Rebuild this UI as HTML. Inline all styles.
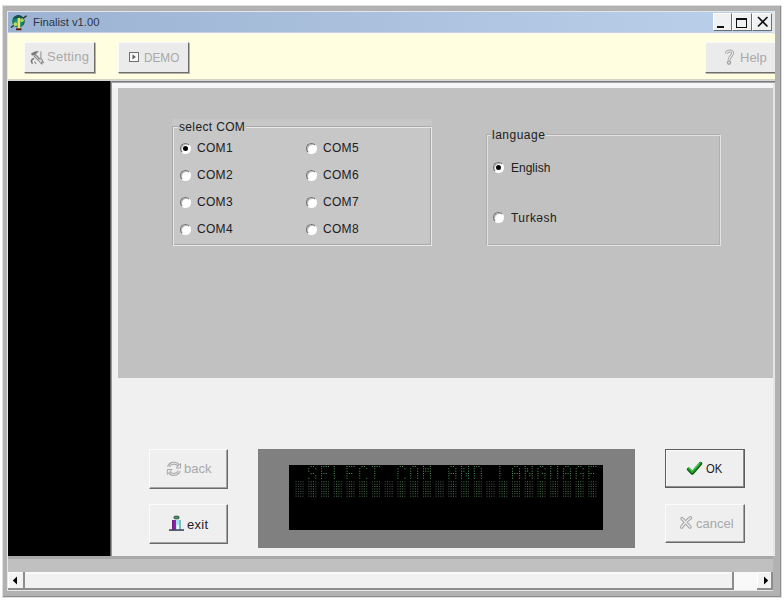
<!DOCTYPE html>
<html><head><meta charset="utf-8">
<style>
*{margin:0;padding:0;box-sizing:border-box}
html,body{width:784px;height:600px;overflow:hidden;background:#fff;font-family:"Liberation Sans",sans-serif;}
.a{position:absolute}
.t{position:absolute;white-space:nowrap;line-height:14px;transform-origin:0 0}
svg{position:absolute;overflow:visible}
.tb{top:13px;height:18px;background:#eff1f3;border-top:1px solid #fff;border-left:1px solid #fff;border-right:1px solid #6a6e72;border-bottom:1px solid #6a6e72}
.btn{background:#ebebeb;border-top:1px solid #fafafa;border-left:1px solid #fafafa;border-right:1px solid #6e6e66;border-bottom:1px solid #6e6e66;box-shadow:1px 1px 0 #b4b4aa}
.grp{box-shadow:inset 1px 1px 0 #a9a9a9, inset -1px -1px 0 #f6f6f6;border-top:1px solid #f6f6f6;border-left:1px solid #f6f6f6;border-right:1px solid #a9a9a9;border-bottom:1px solid #a9a9a9}
.lbl{font-size:12px;color:#202020;letter-spacing:0.3px}
.rad{width:11px;height:11px;border-radius:50%;background:#fff;border-top:1px solid #707070;border-left:1px solid #707070;border-right:1px solid #fff;border-bottom:1px solid #fff;box-shadow:inset 1px 1px 0 #b8b8b8}
.rad.on::after{content:"";position:absolute;left:2px;top:2px;width:5px;height:5px;border-radius:50%;background:#000}
.bb{background:#efefef;border-top:1px solid #fbfbfb;border-left:1px solid #fbfbfb;border-right:1px solid #6a6a6a;border-bottom:1px solid #6a6a6a;box-shadow:inset -1px -1px 0 #a4a4a4}
.gt{color:#a9a9a9;font-size:13px}
</style></head><body>
<!-- window frame -->
<div class="a" style="left:2px;top:5px;width:780px;height:593px;background:#dedede"></div>
<div class="a" style="left:3px;top:6px;width:778px;height:591px;background:#b2b2b2;border-right:1px solid #8e8e8e;border-bottom:1px solid #8e8e8e"></div>
<div class="a" style="left:7px;top:11px;width:768px;height:580px;background:#e4e7ea"></div>
<!-- title -->
<div class="a" style="left:8px;top:12px;width:763px;height:20px;background:linear-gradient(90deg,#9bb2d2,#bbd1ea)"></div>
<div class="a" style="left:8px;top:32px;width:765px;height:1px;background:#c9d3dc"></div>
<div class="t" id="ttl" style="left:33px;top:15px;font-size:11.3px;color:#2b3644">Finalist v1.00</div>
<svg style="left:8px;top:12px" width="24" height="20" viewBox="0 0 24 20">
 <defs><radialGradient id="gl" cx="0.45" cy="0.6" r="0.6"><stop offset="0" stop-color="#20a088"/><stop offset="0.7" stop-color="#127868"/><stop offset="1" stop-color="#0c3c3c"/></radialGradient></defs>
 <line x1="3" y1="15.6" x2="18.6" y2="3.8" stroke="#1c2428" stroke-width="1.3"/>
 <circle cx="10.4" cy="9.4" r="6.3" fill="url(#gl)"/>
 <path d="M5 6.5C6.5 3 14 2.6 15.8 6.5z" fill="#0e5048" opacity="0.8"/>
 <circle cx="14" cy="8.2" r="1.9" fill="#a8e850" opacity="0.9"/>
 <circle cx="7.4" cy="12.2" r="1.9" fill="#c0e84a" opacity="0.9"/>
 <rect x="9.6" y="6" width="2.6" height="10.8" fill="#f0cc50"/>
 <rect x="10.6" y="6" width="0.9" height="10.8" fill="#f8e890"/>
 <rect x="8" y="16.4" width="5.5" height="1.8" fill="#5a1408"/>
</svg>
<div class="a tb" style="left:713px;width:19px"></div>
<div class="a tb" style="left:732px;width:20px"></div>
<div class="a tb" style="left:752px;width:20px"></div>
<div class="a" style="left:717px;top:26px;width:7px;height:2px;background:#111"></div>
<div class="a" style="left:736px;top:18px;width:11px;height:10px;border:1px solid #111;border-top-width:2px"></div>
<svg style="left:757px;top:16px" width="12" height="12" viewBox="0 0 12 12"><path d="M1 1L10.5 10.5M10.5 1L1 10.5" stroke="#111" stroke-width="1.6"/></svg>
<!-- toolbar -->
<div class="a" style="left:8px;top:33px;width:765px;height:1px;background:#fbfbfb"></div>
<div class="a" style="left:8px;top:34px;width:767px;height:45px;background:#fffee0"></div>
<div class="a" style="left:8px;top:79px;width:767px;height:1px;background:#d4d4c6"></div>
<div class="a" style="left:8px;top:80px;width:767px;height:1px;background:#d6d6d6"></div>
<div class="a btn" style="left:24px;top:42px;width:71px;height:31px"></div>
<div class="a btn" style="left:118px;top:42px;width:71px;height:31px"></div>
<div class="a btn" style="left:705px;top:42px;width:70px;height:31px;border-right:none"></div>
<div class="t gt" id="set" style="left:47px;top:50px;letter-spacing:0.25px">Setting</div>
<div class="t gt" id="demo" style="left:144px;top:51px;transform:scaleX(0.905)">DEMO</div>
<div class="t gt" id="help" style="left:740px;top:51px">Help</div>
<svg style="left:29px;top:49px" width="16" height="16" viewBox="0 0 16 16">
 <path d="M2 4.6L6 2.4L9.8 1.9L8.6 3.6L5.6 6.2L3 6.4z" fill="#7a7a7a"/>
 <path d="M5.6 6.2L14 14.6" stroke="#8c8c8c" stroke-width="3.2"/>
 <path d="M5.8 6.6L13.8 14.6" stroke="#e6e6e6" stroke-width="1"/>
 <rect x="11" y="2.4" width="1.7" height="7" fill="#b4b4b4"/>
 <path d="M5.2 9.6C2.2 9.6 1.6 13 3.6 14.6" stroke="#7a7a7a" stroke-width="1.7" fill="none"/>
 <path d="M9.6 10.2L12.6 9.6L14 12.6L11.4 14" fill="#d8d8d8" stroke="#8a8a8a" stroke-width="1"/>
 <path d="M5.5 12.5L7 15" stroke="#8a8a8a" stroke-width="1.2"/>
</svg>
<svg style="left:128px;top:51px" width="12" height="12" viewBox="0 0 12 12">
 <rect x="1.5" y="1.5" width="9" height="9" fill="#f8f8f8" stroke="#6e6e6e" stroke-width="1"/>
 <path d="M4.5 3.2L7.8 5.9L4.5 8.6z" fill="#5c5c5c"/>
</svg>
<svg style="left:722px;top:47px" width="16" height="19" viewBox="0 0 16 19" fill="none">
 <path d="M4.3 6.6C4.6 3.6 10.8 2.8 10.6 6.2C10.4 8.6 7.6 9.4 7 13" stroke="#a6a6a6" stroke-width="3"/>
 <circle cx="7" cy="15.6" r="1.6" stroke="#a6a6a6" stroke-width="1.4"/>
 <path d="M4.3 6.6C4.6 3.6 10.8 2.8 10.6 6.2C10.4 8.6 7.6 9.4 7 13" stroke="#ececec" stroke-width="1.1"/>
</svg>
<!-- client -->
<div class="a" style="left:8px;top:81px;width:767px;height:475px;background:#f0f0f0"></div>
<div class="a" style="left:112px;top:81px;width:663px;height:1px;background:#7c7c80"></div><div class="a" style="left:112px;top:82px;width:663px;height:1px;background:#a4a4a8"></div>
<div class="a" style="left:112px;top:83px;width:663px;height:5px;background:#f6f6f6"></div>
<div class="a" style="left:8px;top:81px;width:102px;height:475px;background:#000"></div>
<div class="a" style="left:110px;top:81px;width:2px;height:475px;background:linear-gradient(90deg,#3c3c3c,#b4b4b4)"></div>
<div class="a" style="left:118px;top:88px;width:655px;height:290px;background:#c1c1c1"></div>
<!-- status & scroll -->
<div class="a" style="left:773px;top:556px;width:2px;height:35px;background:#b2b2b2"></div>
<div class="a" style="left:8px;top:556px;width:765px;height:3px;background:#a9a9a9"></div>
<div class="a" style="left:8px;top:559px;width:765px;height:13px;background:#c0c0c0"></div>
<div class="a" style="left:8px;top:572px;width:765px;height:2px;background:#fafafa"></div>
<div class="a" style="left:8px;top:574px;width:765px;height:14px;background:#f1f1f1"></div>
<div class="a" style="left:8px;top:588px;width:765px;height:2px;background:#8d8d8d"></div>
<div class="a" style="left:8px;top:572px;width:15px;height:16px;background:#f3f3f3;border-top:1px solid #fff;border-left:1px solid #fff"></div>
<div class="a" style="left:23px;top:572px;width:2px;height:17px;background:#8d8d8d"></div>
<svg style="left:12px;top:576px" width="6" height="9" viewBox="0 0 6 9"><path d="M5 0.5V8.5L0.8 4.5z" fill="#000"/></svg>
<div class="a" style="left:732px;top:572px;width:2px;height:18px;background:#8d8d8d"></div>
<div class="a" style="left:734px;top:572px;width:23px;height:18px;background:#f9f9f9"></div>
<div class="a" style="left:757px;top:572px;width:14px;height:16px;background:#f3f3f3;border-top:1px solid #fff;border-left:1px solid #fff"></div>
<div class="a" style="left:757px;top:588px;width:16px;height:2px;background:#8d8d8d"></div>
<div class="a" style="left:771px;top:572px;width:2px;height:18px;background:#8d8d8d"></div>
<svg style="left:763px;top:576px" width="6" height="9" viewBox="0 0 6 9"><path d="M1 0.5V8.5L5.2 4.5z" fill="#000"/></svg>
<div class="a" style="left:773px;top:83px;width:2px;height:473px;background:#e6e6e6"></div>
<!-- groups -->
<div class="a" style="left:172px;top:119px;width:260px;height:127px;background:#c7c7c7"></div>
<div class="a" style="left:172px;top:126px;width:259px;height:119px;border:1px solid #a9a9a9"></div>
<div class="a" style="left:173px;top:127px;width:259px;height:119px;border:1px solid #e8e8e8"></div>
<div class="t lbl" id="selcom" style="left:178px;top:120px;letter-spacing:0.35px;background:#c7c7c7;padding:0 1px">select COM</div>
<div class="a" style="left:486px;top:134px;width:234px;height:111px;border:1px solid #aeaeae"></div>
<div class="a" style="left:487px;top:135px;width:234px;height:111px;border:1px solid #e2e2e2"></div>
<div class="t lbl" id="lang" style="left:491px;top:128px;letter-spacing:0.5px;background:#c1c1c1;padding:0 1px">language</div>

<div class="a rad on" style="left:180px;top:143px"></div><div class="t lbl" style="left:197px;top:141px">COM1</div>
<div class="a rad" style="left:180px;top:170px"></div><div class="t lbl" style="left:197px;top:168px">COM2</div>
<div class="a rad" style="left:180px;top:197px"></div><div class="t lbl" style="left:197px;top:195px">COM3</div>
<div class="a rad" style="left:180px;top:224px"></div><div class="t lbl" style="left:197px;top:222px">COM4</div>
<div class="a rad" style="left:306px;top:143px"></div><div class="t lbl" style="left:323px;top:141px">COM5</div>
<div class="a rad" style="left:306px;top:170px"></div><div class="t lbl" style="left:323px;top:168px">COM6</div>
<div class="a rad" style="left:306px;top:197px"></div><div class="t lbl" style="left:323px;top:195px">COM7</div>
<div class="a rad" style="left:306px;top:224px"></div><div class="t lbl" style="left:323px;top:222px">COM8</div>
<div class="a rad on" style="left:493px;top:162px"></div><div class="t lbl" id="eng" style="left:511px;top:161px;letter-spacing:0px">English</div>
<div class="a rad" style="left:493px;top:212px"></div><div class="t lbl" id="turk" style="left:511px;top:211px;letter-spacing:0.45px">Turkəsh</div>

<!-- bottom buttons -->
<div class="a bb" style="left:149px;top:449px;width:79px;height:40px"></div>
<div class="a bb" style="left:149px;top:504px;width:79px;height:40px"></div>
<div class="a bb" style="left:665px;top:449px;width:80px;height:39px;border:1px solid #5e5e5e;box-shadow:inset -1px -1px 0 #8b8b8b, inset 1px 1px 0 #fbfbfb"></div>
<div class="a bb" style="left:665px;top:504px;width:80px;height:39px"></div>
<div class="t gt" id="back" style="left:184px;top:462px">back</div>
<div class="t" id="exit" style="left:187px;top:518px;letter-spacing:0.3px;font-size:13px;color:#222">exit</div>
<div class="t" id="ok" style="left:706px;top:462px;transform:scaleX(0.87);font-size:13px;color:#222">OK</div>
<div class="t gt" id="cancel" style="left:696px;top:517px">cancel</div>
<svg style="left:164px;top:459px" width="20" height="20" viewBox="0 0 20 20" fill="none">
 <path d="M4.6 8C5.6 4 12 2.6 14.6 6.6" stroke="#a8a8a8" stroke-width="3"/>
 <path d="M15.2 11.8C14.2 15.6 7.6 17 5.4 13" stroke="#a8a8a8" stroke-width="3"/>
 <path d="M4.6 8C5.6 4 12 2.6 14.6 6.6" stroke="#efefef" stroke-width="1"/>
 <path d="M15.2 11.8C14.2 15.6 7.6 17 5.4 13" stroke="#efefef" stroke-width="1"/>
 <path d="M16.5 4.5V9H12z" fill="#efefef" stroke="#a8a8a8" stroke-width="1"/>
 <path d="M3.3 10.5V15.5L8 10.5z" fill="#efefef" stroke="#a8a8a8" stroke-width="1"/>
</svg>
<svg style="left:166px;top:513px" width="20" height="20" viewBox="0 0 20 20">
 <rect x="8" y="3.2" width="5" height="2.6" rx="1" fill="#4a9a6a" stroke="#1c3a2a" stroke-width="0.8"/>
 <rect x="6.3" y="7" width="3.8" height="9.6" fill="#9a1cae"/>
 <rect x="6.3" y="7" width="0.9" height="9.6" fill="#4a1060"/>
 <rect x="10.1" y="7" width="4.4" height="9.6" fill="#9ae6ec"/>
 <rect x="13.6" y="7" width="0.9" height="9.6" fill="#3a8890"/>
 <rect x="10.8" y="12" width="2" height="4.6" fill="#f8ffff"/>
 <rect x="3" y="16.4" width="15" height="1.3" fill="#1c1c3c"/>
</svg>
<svg style="left:684px;top:458px" width="20" height="20" viewBox="0 0 20 20" fill="none">
 <path d="M4.6 11.2L8.3 15L16.6 5.6" stroke="#0a5212" stroke-width="3.4" stroke-linejoin="round" stroke-linecap="round"/>
 <path d="M4.6 10.6L8.3 14.2L16.2 5.2" stroke="#1aa224" stroke-width="2.2" stroke-linejoin="round" stroke-linecap="round"/>
 <path d="M5.2 10.2L8.3 13.2L15.6 5" stroke="#6ee06e" stroke-width="0.8"/>
</svg>
<svg style="left:677px;top:513px" width="18" height="18" viewBox="0 0 18 18" fill="none">
 <path d="M5 5.6L13 14M13.6 4.8C10.5 6.8 7.2 10.8 4.6 14.2" stroke="#a8a8a8" stroke-width="3.4" stroke-linecap="round"/>
 <path d="M5 5.6L13 14M13.6 4.8C10.5 6.8 7.2 10.8 4.6 14.2" stroke="#efefef" stroke-width="1.3" stroke-linecap="round"/>
</svg>

<!-- LCD -->
<div class="a" style="left:258px;top:449px;width:377px;height:99px;background:#808080"></div>
<div class="a" style="left:289px;top:465px;width:314px;height:65px;background:#000;overflow:hidden"><svg width="314" height="65" viewBox="0 0 314 65" style="left:0;top:0"><path fill="#52965a" d="M21.66 1.00h1.0v1.0h-1.0zM23.99 1.00h1.0v1.0h-1.0zM19.33 3.33h1.0v1.0h-1.0zM26.32 3.33h1.0v1.0h-1.0zM19.33 5.66h1.0v1.0h-1.0zM21.66 7.99h1.0v1.0h-1.0zM23.99 7.99h1.0v1.0h-1.0zM26.32 10.32h1.0v1.0h-1.0zM19.33 12.65h1.0v1.0h-1.0zM26.32 12.65h1.0v1.0h-1.0zM32.06 1.00h1.0v1.0h-1.0zM34.39 1.00h1.0v1.0h-1.0zM36.72 1.00h1.0v1.0h-1.0zM39.05 1.00h1.0v1.0h-1.0zM32.06 3.33h1.0v1.0h-1.0zM32.06 5.66h1.0v1.0h-1.0zM32.06 7.99h1.0v1.0h-1.0zM34.39 7.99h1.0v1.0h-1.0zM36.72 7.99h1.0v1.0h-1.0zM32.06 10.32h1.0v1.0h-1.0zM32.06 12.65h1.0v1.0h-1.0zM44.79 1.00h1.0v1.0h-1.0zM44.79 3.33h1.0v1.0h-1.0zM44.79 5.66h1.0v1.0h-1.0zM44.79 7.99h1.0v1.0h-1.0zM44.79 10.32h1.0v1.0h-1.0zM44.79 12.65h1.0v1.0h-1.0zM57.52 1.00h1.0v1.0h-1.0zM59.85 1.00h1.0v1.0h-1.0zM62.18 1.00h1.0v1.0h-1.0zM64.51 1.00h1.0v1.0h-1.0zM57.52 3.33h1.0v1.0h-1.0zM57.52 5.66h1.0v1.0h-1.0zM57.52 7.99h1.0v1.0h-1.0zM59.85 7.99h1.0v1.0h-1.0zM62.18 7.99h1.0v1.0h-1.0zM57.52 10.32h1.0v1.0h-1.0zM57.52 12.65h1.0v1.0h-1.0zM72.58 1.00h1.0v1.0h-1.0zM74.91 1.00h1.0v1.0h-1.0zM70.25 3.33h1.0v1.0h-1.0zM77.24 3.33h1.0v1.0h-1.0zM70.25 5.66h1.0v1.0h-1.0zM70.25 7.99h1.0v1.0h-1.0zM70.25 10.32h1.0v1.0h-1.0zM70.25 12.65h1.0v1.0h-1.0zM77.24 12.65h1.0v1.0h-1.0zM82.98 1.00h1.0v1.0h-1.0zM85.31 1.00h1.0v1.0h-1.0zM87.64 1.00h1.0v1.0h-1.0zM89.97 1.00h1.0v1.0h-1.0zM85.31 3.33h1.0v1.0h-1.0zM85.31 5.66h1.0v1.0h-1.0zM85.31 7.99h1.0v1.0h-1.0zM85.31 10.32h1.0v1.0h-1.0zM85.31 12.65h1.0v1.0h-1.0zM110.77 1.00h1.0v1.0h-1.0zM113.10 1.00h1.0v1.0h-1.0zM108.44 3.33h1.0v1.0h-1.0zM115.43 3.33h1.0v1.0h-1.0zM108.44 5.66h1.0v1.0h-1.0zM108.44 7.99h1.0v1.0h-1.0zM108.44 10.32h1.0v1.0h-1.0zM108.44 12.65h1.0v1.0h-1.0zM115.43 12.65h1.0v1.0h-1.0zM123.50 1.00h1.0v1.0h-1.0zM125.83 1.00h1.0v1.0h-1.0zM121.17 3.33h1.0v1.0h-1.0zM128.16 3.33h1.0v1.0h-1.0zM121.17 5.66h1.0v1.0h-1.0zM128.16 5.66h1.0v1.0h-1.0zM121.17 7.99h1.0v1.0h-1.0zM128.16 7.99h1.0v1.0h-1.0zM121.17 10.32h1.0v1.0h-1.0zM128.16 10.32h1.0v1.0h-1.0zM121.17 12.65h1.0v1.0h-1.0zM128.16 12.65h1.0v1.0h-1.0zM133.90 1.00h1.0v1.0h-1.0zM140.89 1.00h1.0v1.0h-1.0zM133.90 3.33h1.0v1.0h-1.0zM136.23 3.33h1.0v1.0h-1.0zM138.56 3.33h1.0v1.0h-1.0zM140.89 3.33h1.0v1.0h-1.0zM133.90 5.66h1.0v1.0h-1.0zM136.23 5.66h1.0v1.0h-1.0zM138.56 5.66h1.0v1.0h-1.0zM140.89 5.66h1.0v1.0h-1.0zM133.90 7.99h1.0v1.0h-1.0zM140.89 7.99h1.0v1.0h-1.0zM133.90 10.32h1.0v1.0h-1.0zM140.89 10.32h1.0v1.0h-1.0zM133.90 12.65h1.0v1.0h-1.0zM140.89 12.65h1.0v1.0h-1.0zM161.69 1.00h1.0v1.0h-1.0zM164.02 1.00h1.0v1.0h-1.0zM159.36 3.33h1.0v1.0h-1.0zM166.35 3.33h1.0v1.0h-1.0zM159.36 5.66h1.0v1.0h-1.0zM166.35 5.66h1.0v1.0h-1.0zM159.36 7.99h1.0v1.0h-1.0zM161.69 7.99h1.0v1.0h-1.0zM164.02 7.99h1.0v1.0h-1.0zM166.35 7.99h1.0v1.0h-1.0zM159.36 10.32h1.0v1.0h-1.0zM166.35 10.32h1.0v1.0h-1.0zM159.36 12.65h1.0v1.0h-1.0zM166.35 12.65h1.0v1.0h-1.0zM172.09 1.00h1.0v1.0h-1.0zM179.08 1.00h1.0v1.0h-1.0zM172.09 3.33h1.0v1.0h-1.0zM174.42 3.33h1.0v1.0h-1.0zM179.08 3.33h1.0v1.0h-1.0zM172.09 5.66h1.0v1.0h-1.0zM174.42 5.66h1.0v1.0h-1.0zM179.08 5.66h1.0v1.0h-1.0zM172.09 7.99h1.0v1.0h-1.0zM176.75 7.99h1.0v1.0h-1.0zM179.08 7.99h1.0v1.0h-1.0zM172.09 10.32h1.0v1.0h-1.0zM176.75 10.32h1.0v1.0h-1.0zM179.08 10.32h1.0v1.0h-1.0zM172.09 12.65h1.0v1.0h-1.0zM179.08 12.65h1.0v1.0h-1.0zM184.82 1.00h1.0v1.0h-1.0zM187.15 1.00h1.0v1.0h-1.0zM189.48 1.00h1.0v1.0h-1.0zM184.82 3.33h1.0v1.0h-1.0zM191.81 3.33h1.0v1.0h-1.0zM184.82 5.66h1.0v1.0h-1.0zM191.81 5.66h1.0v1.0h-1.0zM184.82 7.99h1.0v1.0h-1.0zM191.81 7.99h1.0v1.0h-1.0zM184.82 10.32h1.0v1.0h-1.0zM191.81 10.32h1.0v1.0h-1.0zM184.82 12.65h1.0v1.0h-1.0zM191.81 12.65h1.0v1.0h-1.0zM210.28 1.00h1.0v1.0h-1.0zM210.28 3.33h1.0v1.0h-1.0zM210.28 5.66h1.0v1.0h-1.0zM210.28 7.99h1.0v1.0h-1.0zM210.28 10.32h1.0v1.0h-1.0zM210.28 12.65h1.0v1.0h-1.0zM225.34 1.00h1.0v1.0h-1.0zM227.67 1.00h1.0v1.0h-1.0zM223.01 3.33h1.0v1.0h-1.0zM230.00 3.33h1.0v1.0h-1.0zM223.01 5.66h1.0v1.0h-1.0zM230.00 5.66h1.0v1.0h-1.0zM223.01 7.99h1.0v1.0h-1.0zM225.34 7.99h1.0v1.0h-1.0zM227.67 7.99h1.0v1.0h-1.0zM230.00 7.99h1.0v1.0h-1.0zM223.01 10.32h1.0v1.0h-1.0zM230.00 10.32h1.0v1.0h-1.0zM223.01 12.65h1.0v1.0h-1.0zM230.00 12.65h1.0v1.0h-1.0zM235.74 1.00h1.0v1.0h-1.0zM242.73 1.00h1.0v1.0h-1.0zM235.74 3.33h1.0v1.0h-1.0zM238.07 3.33h1.0v1.0h-1.0zM242.73 3.33h1.0v1.0h-1.0zM235.74 5.66h1.0v1.0h-1.0zM238.07 5.66h1.0v1.0h-1.0zM242.73 5.66h1.0v1.0h-1.0zM235.74 7.99h1.0v1.0h-1.0zM240.40 7.99h1.0v1.0h-1.0zM242.73 7.99h1.0v1.0h-1.0zM235.74 10.32h1.0v1.0h-1.0zM240.40 10.32h1.0v1.0h-1.0zM242.73 10.32h1.0v1.0h-1.0zM235.74 12.65h1.0v1.0h-1.0zM242.73 12.65h1.0v1.0h-1.0zM250.80 1.00h1.0v1.0h-1.0zM253.13 1.00h1.0v1.0h-1.0zM248.47 3.33h1.0v1.0h-1.0zM255.46 3.33h1.0v1.0h-1.0zM248.47 5.66h1.0v1.0h-1.0zM248.47 7.99h1.0v1.0h-1.0zM253.13 7.99h1.0v1.0h-1.0zM255.46 7.99h1.0v1.0h-1.0zM248.47 10.32h1.0v1.0h-1.0zM255.46 10.32h1.0v1.0h-1.0zM248.47 12.65h1.0v1.0h-1.0zM255.46 12.65h1.0v1.0h-1.0zM261.20 1.00h1.0v1.0h-1.0zM268.19 1.00h1.0v1.0h-1.0zM261.20 3.33h1.0v1.0h-1.0zM268.19 3.33h1.0v1.0h-1.0zM261.20 5.66h1.0v1.0h-1.0zM268.19 5.66h1.0v1.0h-1.0zM261.20 7.99h1.0v1.0h-1.0zM268.19 7.99h1.0v1.0h-1.0zM261.20 10.32h1.0v1.0h-1.0zM268.19 10.32h1.0v1.0h-1.0zM261.20 12.65h1.0v1.0h-1.0zM268.19 12.65h1.0v1.0h-1.0zM276.26 1.00h1.0v1.0h-1.0zM278.59 1.00h1.0v1.0h-1.0zM273.93 3.33h1.0v1.0h-1.0zM280.92 3.33h1.0v1.0h-1.0zM273.93 5.66h1.0v1.0h-1.0zM280.92 5.66h1.0v1.0h-1.0zM273.93 7.99h1.0v1.0h-1.0zM276.26 7.99h1.0v1.0h-1.0zM278.59 7.99h1.0v1.0h-1.0zM280.92 7.99h1.0v1.0h-1.0zM273.93 10.32h1.0v1.0h-1.0zM280.92 10.32h1.0v1.0h-1.0zM273.93 12.65h1.0v1.0h-1.0zM280.92 12.65h1.0v1.0h-1.0zM288.99 1.00h1.0v1.0h-1.0zM291.32 1.00h1.0v1.0h-1.0zM286.66 3.33h1.0v1.0h-1.0zM293.65 3.33h1.0v1.0h-1.0zM286.66 5.66h1.0v1.0h-1.0zM286.66 7.99h1.0v1.0h-1.0zM291.32 7.99h1.0v1.0h-1.0zM293.65 7.99h1.0v1.0h-1.0zM286.66 10.32h1.0v1.0h-1.0zM293.65 10.32h1.0v1.0h-1.0zM286.66 12.65h1.0v1.0h-1.0zM293.65 12.65h1.0v1.0h-1.0zM299.39 1.00h1.0v1.0h-1.0zM301.72 1.00h1.0v1.0h-1.0zM304.05 1.00h1.0v1.0h-1.0zM306.38 1.00h1.0v1.0h-1.0zM299.39 3.33h1.0v1.0h-1.0zM299.39 5.66h1.0v1.0h-1.0zM299.39 7.99h1.0v1.0h-1.0zM301.72 7.99h1.0v1.0h-1.0zM304.05 7.99h1.0v1.0h-1.0zM299.39 10.32h1.0v1.0h-1.0zM299.39 12.65h1.0v1.0h-1.0z"/><path fill="#4a544c" d="M6.60 16.30h1.0v1.0h-1.0zM8.93 16.30h1.0v1.0h-1.0zM11.26 16.30h1.0v1.0h-1.0zM13.59 16.30h1.0v1.0h-1.0zM6.60 18.70h1.0v1.0h-1.0zM8.93 18.70h1.0v1.0h-1.0zM11.26 18.70h1.0v1.0h-1.0zM13.59 18.70h1.0v1.0h-1.0zM6.60 21.10h1.0v1.0h-1.0zM8.93 21.10h1.0v1.0h-1.0zM11.26 21.10h1.0v1.0h-1.0zM13.59 21.10h1.0v1.0h-1.0zM6.60 23.50h1.0v1.0h-1.0zM8.93 23.50h1.0v1.0h-1.0zM11.26 23.50h1.0v1.0h-1.0zM13.59 23.50h1.0v1.0h-1.0zM6.60 25.90h1.0v1.0h-1.0zM8.93 25.90h1.0v1.0h-1.0zM11.26 25.90h1.0v1.0h-1.0zM13.59 25.90h1.0v1.0h-1.0zM6.60 28.30h1.0v1.0h-1.0zM8.93 28.30h1.0v1.0h-1.0zM11.26 28.30h1.0v1.0h-1.0zM13.59 28.30h1.0v1.0h-1.0zM6.60 30.70h1.0v1.0h-1.0zM8.93 30.70h1.0v1.0h-1.0zM11.26 30.70h1.0v1.0h-1.0zM13.59 30.70h1.0v1.0h-1.0zM19.33 16.30h1.0v1.0h-1.0zM26.32 16.30h1.0v1.0h-1.0zM19.33 18.70h1.0v1.0h-1.0zM26.32 18.70h1.0v1.0h-1.0zM19.33 21.10h1.0v1.0h-1.0zM26.32 21.10h1.0v1.0h-1.0zM19.33 23.50h1.0v1.0h-1.0zM26.32 23.50h1.0v1.0h-1.0zM19.33 25.90h1.0v1.0h-1.0zM26.32 25.90h1.0v1.0h-1.0zM19.33 28.30h1.0v1.0h-1.0zM26.32 28.30h1.0v1.0h-1.0zM19.33 30.70h1.0v1.0h-1.0zM26.32 30.70h1.0v1.0h-1.0zM32.06 16.30h1.0v1.0h-1.0zM39.05 16.30h1.0v1.0h-1.0zM32.06 18.70h1.0v1.0h-1.0zM39.05 18.70h1.0v1.0h-1.0zM32.06 21.10h1.0v1.0h-1.0zM39.05 21.10h1.0v1.0h-1.0zM32.06 23.50h1.0v1.0h-1.0zM39.05 23.50h1.0v1.0h-1.0zM32.06 25.90h1.0v1.0h-1.0zM39.05 25.90h1.0v1.0h-1.0zM32.06 28.30h1.0v1.0h-1.0zM39.05 28.30h1.0v1.0h-1.0zM32.06 30.70h1.0v1.0h-1.0zM39.05 30.70h1.0v1.0h-1.0zM44.79 16.30h1.0v1.0h-1.0zM51.78 16.30h1.0v1.0h-1.0zM44.79 18.70h1.0v1.0h-1.0zM51.78 18.70h1.0v1.0h-1.0zM44.79 21.10h1.0v1.0h-1.0zM51.78 21.10h1.0v1.0h-1.0zM44.79 23.50h1.0v1.0h-1.0zM51.78 23.50h1.0v1.0h-1.0zM44.79 25.90h1.0v1.0h-1.0zM51.78 25.90h1.0v1.0h-1.0zM44.79 28.30h1.0v1.0h-1.0zM51.78 28.30h1.0v1.0h-1.0zM44.79 30.70h1.0v1.0h-1.0zM51.78 30.70h1.0v1.0h-1.0zM57.52 16.30h1.0v1.0h-1.0zM64.51 16.30h1.0v1.0h-1.0zM57.52 18.70h1.0v1.0h-1.0zM64.51 18.70h1.0v1.0h-1.0zM57.52 21.10h1.0v1.0h-1.0zM64.51 21.10h1.0v1.0h-1.0zM57.52 23.50h1.0v1.0h-1.0zM64.51 23.50h1.0v1.0h-1.0zM57.52 25.90h1.0v1.0h-1.0zM64.51 25.90h1.0v1.0h-1.0zM57.52 28.30h1.0v1.0h-1.0zM64.51 28.30h1.0v1.0h-1.0zM57.52 30.70h1.0v1.0h-1.0zM64.51 30.70h1.0v1.0h-1.0zM70.25 16.30h1.0v1.0h-1.0zM77.24 16.30h1.0v1.0h-1.0zM70.25 18.70h1.0v1.0h-1.0zM77.24 18.70h1.0v1.0h-1.0zM70.25 21.10h1.0v1.0h-1.0zM77.24 21.10h1.0v1.0h-1.0zM70.25 23.50h1.0v1.0h-1.0zM77.24 23.50h1.0v1.0h-1.0zM70.25 25.90h1.0v1.0h-1.0zM77.24 25.90h1.0v1.0h-1.0zM70.25 28.30h1.0v1.0h-1.0zM77.24 28.30h1.0v1.0h-1.0zM70.25 30.70h1.0v1.0h-1.0zM77.24 30.70h1.0v1.0h-1.0zM82.98 16.30h1.0v1.0h-1.0zM89.97 16.30h1.0v1.0h-1.0zM82.98 18.70h1.0v1.0h-1.0zM89.97 18.70h1.0v1.0h-1.0zM82.98 21.10h1.0v1.0h-1.0zM89.97 21.10h1.0v1.0h-1.0zM82.98 23.50h1.0v1.0h-1.0zM89.97 23.50h1.0v1.0h-1.0zM82.98 25.90h1.0v1.0h-1.0zM89.97 25.90h1.0v1.0h-1.0zM82.98 28.30h1.0v1.0h-1.0zM89.97 28.30h1.0v1.0h-1.0zM82.98 30.70h1.0v1.0h-1.0zM89.97 30.70h1.0v1.0h-1.0zM95.71 16.30h1.0v1.0h-1.0zM98.04 16.30h1.0v1.0h-1.0zM100.37 16.30h1.0v1.0h-1.0zM102.70 16.30h1.0v1.0h-1.0zM95.71 18.70h1.0v1.0h-1.0zM98.04 18.70h1.0v1.0h-1.0zM100.37 18.70h1.0v1.0h-1.0zM102.70 18.70h1.0v1.0h-1.0zM95.71 21.10h1.0v1.0h-1.0zM98.04 21.10h1.0v1.0h-1.0zM100.37 21.10h1.0v1.0h-1.0zM102.70 21.10h1.0v1.0h-1.0zM95.71 23.50h1.0v1.0h-1.0zM98.04 23.50h1.0v1.0h-1.0zM100.37 23.50h1.0v1.0h-1.0zM102.70 23.50h1.0v1.0h-1.0zM95.71 25.90h1.0v1.0h-1.0zM98.04 25.90h1.0v1.0h-1.0zM100.37 25.90h1.0v1.0h-1.0zM102.70 25.90h1.0v1.0h-1.0zM95.71 28.30h1.0v1.0h-1.0zM98.04 28.30h1.0v1.0h-1.0zM100.37 28.30h1.0v1.0h-1.0zM102.70 28.30h1.0v1.0h-1.0zM95.71 30.70h1.0v1.0h-1.0zM98.04 30.70h1.0v1.0h-1.0zM100.37 30.70h1.0v1.0h-1.0zM102.70 30.70h1.0v1.0h-1.0zM108.44 16.30h1.0v1.0h-1.0zM115.43 16.30h1.0v1.0h-1.0zM108.44 18.70h1.0v1.0h-1.0zM115.43 18.70h1.0v1.0h-1.0zM108.44 21.10h1.0v1.0h-1.0zM115.43 21.10h1.0v1.0h-1.0zM108.44 23.50h1.0v1.0h-1.0zM115.43 23.50h1.0v1.0h-1.0zM108.44 25.90h1.0v1.0h-1.0zM115.43 25.90h1.0v1.0h-1.0zM108.44 28.30h1.0v1.0h-1.0zM115.43 28.30h1.0v1.0h-1.0zM108.44 30.70h1.0v1.0h-1.0zM115.43 30.70h1.0v1.0h-1.0zM121.17 16.30h1.0v1.0h-1.0zM128.16 16.30h1.0v1.0h-1.0zM121.17 18.70h1.0v1.0h-1.0zM128.16 18.70h1.0v1.0h-1.0zM121.17 21.10h1.0v1.0h-1.0zM128.16 21.10h1.0v1.0h-1.0zM121.17 23.50h1.0v1.0h-1.0zM128.16 23.50h1.0v1.0h-1.0zM121.17 25.90h1.0v1.0h-1.0zM128.16 25.90h1.0v1.0h-1.0zM121.17 28.30h1.0v1.0h-1.0zM128.16 28.30h1.0v1.0h-1.0zM121.17 30.70h1.0v1.0h-1.0zM128.16 30.70h1.0v1.0h-1.0zM133.90 16.30h1.0v1.0h-1.0zM140.89 16.30h1.0v1.0h-1.0zM133.90 18.70h1.0v1.0h-1.0zM140.89 18.70h1.0v1.0h-1.0zM133.90 21.10h1.0v1.0h-1.0zM140.89 21.10h1.0v1.0h-1.0zM133.90 23.50h1.0v1.0h-1.0zM140.89 23.50h1.0v1.0h-1.0zM133.90 25.90h1.0v1.0h-1.0zM140.89 25.90h1.0v1.0h-1.0zM133.90 28.30h1.0v1.0h-1.0zM140.89 28.30h1.0v1.0h-1.0zM133.90 30.70h1.0v1.0h-1.0zM140.89 30.70h1.0v1.0h-1.0zM146.63 16.30h1.0v1.0h-1.0zM148.96 16.30h1.0v1.0h-1.0zM151.29 16.30h1.0v1.0h-1.0zM153.62 16.30h1.0v1.0h-1.0zM146.63 18.70h1.0v1.0h-1.0zM148.96 18.70h1.0v1.0h-1.0zM151.29 18.70h1.0v1.0h-1.0zM153.62 18.70h1.0v1.0h-1.0zM146.63 21.10h1.0v1.0h-1.0zM148.96 21.10h1.0v1.0h-1.0zM151.29 21.10h1.0v1.0h-1.0zM153.62 21.10h1.0v1.0h-1.0zM146.63 23.50h1.0v1.0h-1.0zM148.96 23.50h1.0v1.0h-1.0zM151.29 23.50h1.0v1.0h-1.0zM153.62 23.50h1.0v1.0h-1.0zM146.63 25.90h1.0v1.0h-1.0zM148.96 25.90h1.0v1.0h-1.0zM151.29 25.90h1.0v1.0h-1.0zM153.62 25.90h1.0v1.0h-1.0zM146.63 28.30h1.0v1.0h-1.0zM148.96 28.30h1.0v1.0h-1.0zM151.29 28.30h1.0v1.0h-1.0zM153.62 28.30h1.0v1.0h-1.0zM146.63 30.70h1.0v1.0h-1.0zM148.96 30.70h1.0v1.0h-1.0zM151.29 30.70h1.0v1.0h-1.0zM153.62 30.70h1.0v1.0h-1.0zM159.36 16.30h1.0v1.0h-1.0zM166.35 16.30h1.0v1.0h-1.0zM159.36 18.70h1.0v1.0h-1.0zM166.35 18.70h1.0v1.0h-1.0zM159.36 21.10h1.0v1.0h-1.0zM166.35 21.10h1.0v1.0h-1.0zM159.36 23.50h1.0v1.0h-1.0zM166.35 23.50h1.0v1.0h-1.0zM159.36 25.90h1.0v1.0h-1.0zM166.35 25.90h1.0v1.0h-1.0zM159.36 28.30h1.0v1.0h-1.0zM166.35 28.30h1.0v1.0h-1.0zM159.36 30.70h1.0v1.0h-1.0zM166.35 30.70h1.0v1.0h-1.0zM172.09 16.30h1.0v1.0h-1.0zM179.08 16.30h1.0v1.0h-1.0zM172.09 18.70h1.0v1.0h-1.0zM179.08 18.70h1.0v1.0h-1.0zM172.09 21.10h1.0v1.0h-1.0zM179.08 21.10h1.0v1.0h-1.0zM172.09 23.50h1.0v1.0h-1.0zM179.08 23.50h1.0v1.0h-1.0zM172.09 25.90h1.0v1.0h-1.0zM179.08 25.90h1.0v1.0h-1.0zM172.09 28.30h1.0v1.0h-1.0zM179.08 28.30h1.0v1.0h-1.0zM172.09 30.70h1.0v1.0h-1.0zM179.08 30.70h1.0v1.0h-1.0zM184.82 16.30h1.0v1.0h-1.0zM191.81 16.30h1.0v1.0h-1.0zM184.82 18.70h1.0v1.0h-1.0zM191.81 18.70h1.0v1.0h-1.0zM184.82 21.10h1.0v1.0h-1.0zM191.81 21.10h1.0v1.0h-1.0zM184.82 23.50h1.0v1.0h-1.0zM191.81 23.50h1.0v1.0h-1.0zM184.82 25.90h1.0v1.0h-1.0zM191.81 25.90h1.0v1.0h-1.0zM184.82 28.30h1.0v1.0h-1.0zM191.81 28.30h1.0v1.0h-1.0zM184.82 30.70h1.0v1.0h-1.0zM191.81 30.70h1.0v1.0h-1.0zM197.55 16.30h1.0v1.0h-1.0zM199.88 16.30h1.0v1.0h-1.0zM202.21 16.30h1.0v1.0h-1.0zM204.54 16.30h1.0v1.0h-1.0zM197.55 18.70h1.0v1.0h-1.0zM199.88 18.70h1.0v1.0h-1.0zM202.21 18.70h1.0v1.0h-1.0zM204.54 18.70h1.0v1.0h-1.0zM197.55 21.10h1.0v1.0h-1.0zM199.88 21.10h1.0v1.0h-1.0zM202.21 21.10h1.0v1.0h-1.0zM204.54 21.10h1.0v1.0h-1.0zM197.55 23.50h1.0v1.0h-1.0zM199.88 23.50h1.0v1.0h-1.0zM202.21 23.50h1.0v1.0h-1.0zM204.54 23.50h1.0v1.0h-1.0zM197.55 25.90h1.0v1.0h-1.0zM199.88 25.90h1.0v1.0h-1.0zM202.21 25.90h1.0v1.0h-1.0zM204.54 25.90h1.0v1.0h-1.0zM197.55 28.30h1.0v1.0h-1.0zM199.88 28.30h1.0v1.0h-1.0zM202.21 28.30h1.0v1.0h-1.0zM204.54 28.30h1.0v1.0h-1.0zM197.55 30.70h1.0v1.0h-1.0zM199.88 30.70h1.0v1.0h-1.0zM202.21 30.70h1.0v1.0h-1.0zM204.54 30.70h1.0v1.0h-1.0zM210.28 16.30h1.0v1.0h-1.0zM217.27 16.30h1.0v1.0h-1.0zM210.28 18.70h1.0v1.0h-1.0zM217.27 18.70h1.0v1.0h-1.0zM210.28 21.10h1.0v1.0h-1.0zM217.27 21.10h1.0v1.0h-1.0zM210.28 23.50h1.0v1.0h-1.0zM217.27 23.50h1.0v1.0h-1.0zM210.28 25.90h1.0v1.0h-1.0zM217.27 25.90h1.0v1.0h-1.0zM210.28 28.30h1.0v1.0h-1.0zM217.27 28.30h1.0v1.0h-1.0zM210.28 30.70h1.0v1.0h-1.0zM217.27 30.70h1.0v1.0h-1.0zM223.01 16.30h1.0v1.0h-1.0zM230.00 16.30h1.0v1.0h-1.0zM223.01 18.70h1.0v1.0h-1.0zM230.00 18.70h1.0v1.0h-1.0zM223.01 21.10h1.0v1.0h-1.0zM230.00 21.10h1.0v1.0h-1.0zM223.01 23.50h1.0v1.0h-1.0zM230.00 23.50h1.0v1.0h-1.0zM223.01 25.90h1.0v1.0h-1.0zM230.00 25.90h1.0v1.0h-1.0zM223.01 28.30h1.0v1.0h-1.0zM230.00 28.30h1.0v1.0h-1.0zM223.01 30.70h1.0v1.0h-1.0zM230.00 30.70h1.0v1.0h-1.0zM235.74 16.30h1.0v1.0h-1.0zM242.73 16.30h1.0v1.0h-1.0zM235.74 18.70h1.0v1.0h-1.0zM242.73 18.70h1.0v1.0h-1.0zM235.74 21.10h1.0v1.0h-1.0zM242.73 21.10h1.0v1.0h-1.0zM235.74 23.50h1.0v1.0h-1.0zM242.73 23.50h1.0v1.0h-1.0zM235.74 25.90h1.0v1.0h-1.0zM242.73 25.90h1.0v1.0h-1.0zM235.74 28.30h1.0v1.0h-1.0zM242.73 28.30h1.0v1.0h-1.0zM235.74 30.70h1.0v1.0h-1.0zM242.73 30.70h1.0v1.0h-1.0zM248.47 16.30h1.0v1.0h-1.0zM255.46 16.30h1.0v1.0h-1.0zM248.47 18.70h1.0v1.0h-1.0zM255.46 18.70h1.0v1.0h-1.0zM248.47 21.10h1.0v1.0h-1.0zM255.46 21.10h1.0v1.0h-1.0zM248.47 23.50h1.0v1.0h-1.0zM255.46 23.50h1.0v1.0h-1.0zM248.47 25.90h1.0v1.0h-1.0zM255.46 25.90h1.0v1.0h-1.0zM248.47 28.30h1.0v1.0h-1.0zM255.46 28.30h1.0v1.0h-1.0zM248.47 30.70h1.0v1.0h-1.0zM255.46 30.70h1.0v1.0h-1.0zM261.20 16.30h1.0v1.0h-1.0zM268.19 16.30h1.0v1.0h-1.0zM261.20 18.70h1.0v1.0h-1.0zM268.19 18.70h1.0v1.0h-1.0zM261.20 21.10h1.0v1.0h-1.0zM268.19 21.10h1.0v1.0h-1.0zM261.20 23.50h1.0v1.0h-1.0zM268.19 23.50h1.0v1.0h-1.0zM261.20 25.90h1.0v1.0h-1.0zM268.19 25.90h1.0v1.0h-1.0zM261.20 28.30h1.0v1.0h-1.0zM268.19 28.30h1.0v1.0h-1.0zM261.20 30.70h1.0v1.0h-1.0zM268.19 30.70h1.0v1.0h-1.0zM273.93 16.30h1.0v1.0h-1.0zM280.92 16.30h1.0v1.0h-1.0zM273.93 18.70h1.0v1.0h-1.0zM280.92 18.70h1.0v1.0h-1.0zM273.93 21.10h1.0v1.0h-1.0zM280.92 21.10h1.0v1.0h-1.0zM273.93 23.50h1.0v1.0h-1.0zM280.92 23.50h1.0v1.0h-1.0zM273.93 25.90h1.0v1.0h-1.0zM280.92 25.90h1.0v1.0h-1.0zM273.93 28.30h1.0v1.0h-1.0zM280.92 28.30h1.0v1.0h-1.0zM273.93 30.70h1.0v1.0h-1.0zM280.92 30.70h1.0v1.0h-1.0zM286.66 16.30h1.0v1.0h-1.0zM293.65 16.30h1.0v1.0h-1.0zM286.66 18.70h1.0v1.0h-1.0zM293.65 18.70h1.0v1.0h-1.0zM286.66 21.10h1.0v1.0h-1.0zM293.65 21.10h1.0v1.0h-1.0zM286.66 23.50h1.0v1.0h-1.0zM293.65 23.50h1.0v1.0h-1.0zM286.66 25.90h1.0v1.0h-1.0zM293.65 25.90h1.0v1.0h-1.0zM286.66 28.30h1.0v1.0h-1.0zM293.65 28.30h1.0v1.0h-1.0zM286.66 30.70h1.0v1.0h-1.0zM293.65 30.70h1.0v1.0h-1.0zM299.39 16.30h1.0v1.0h-1.0zM306.38 16.30h1.0v1.0h-1.0zM299.39 18.70h1.0v1.0h-1.0zM306.38 18.70h1.0v1.0h-1.0zM299.39 21.10h1.0v1.0h-1.0zM306.38 21.10h1.0v1.0h-1.0zM299.39 23.50h1.0v1.0h-1.0zM306.38 23.50h1.0v1.0h-1.0zM299.39 25.90h1.0v1.0h-1.0zM306.38 25.90h1.0v1.0h-1.0zM299.39 28.30h1.0v1.0h-1.0zM306.38 28.30h1.0v1.0h-1.0zM299.39 30.70h1.0v1.0h-1.0zM306.38 30.70h1.0v1.0h-1.0z"/><path fill="#4a7c4c" d="M21.66 16.30h1.0v1.0h-1.0zM23.99 16.30h1.0v1.0h-1.0zM21.66 18.70h1.0v1.0h-1.0zM23.99 18.70h1.0v1.0h-1.0zM21.66 21.10h1.0v1.0h-1.0zM23.99 21.10h1.0v1.0h-1.0zM21.66 23.50h1.0v1.0h-1.0zM23.99 23.50h1.0v1.0h-1.0zM21.66 25.90h1.0v1.0h-1.0zM23.99 25.90h1.0v1.0h-1.0zM21.66 28.30h1.0v1.0h-1.0zM23.99 28.30h1.0v1.0h-1.0zM21.66 30.70h1.0v1.0h-1.0zM23.99 30.70h1.0v1.0h-1.0zM34.39 16.30h1.0v1.0h-1.0zM36.72 16.30h1.0v1.0h-1.0zM34.39 18.70h1.0v1.0h-1.0zM36.72 18.70h1.0v1.0h-1.0zM34.39 21.10h1.0v1.0h-1.0zM36.72 21.10h1.0v1.0h-1.0zM34.39 23.50h1.0v1.0h-1.0zM36.72 23.50h1.0v1.0h-1.0zM34.39 25.90h1.0v1.0h-1.0zM36.72 25.90h1.0v1.0h-1.0zM34.39 28.30h1.0v1.0h-1.0zM36.72 28.30h1.0v1.0h-1.0zM34.39 30.70h1.0v1.0h-1.0zM36.72 30.70h1.0v1.0h-1.0zM47.12 16.30h1.0v1.0h-1.0zM49.45 16.30h1.0v1.0h-1.0zM47.12 18.70h1.0v1.0h-1.0zM49.45 18.70h1.0v1.0h-1.0zM47.12 21.10h1.0v1.0h-1.0zM49.45 21.10h1.0v1.0h-1.0zM47.12 23.50h1.0v1.0h-1.0zM49.45 23.50h1.0v1.0h-1.0zM47.12 25.90h1.0v1.0h-1.0zM49.45 25.90h1.0v1.0h-1.0zM47.12 28.30h1.0v1.0h-1.0zM49.45 28.30h1.0v1.0h-1.0zM47.12 30.70h1.0v1.0h-1.0zM49.45 30.70h1.0v1.0h-1.0zM59.85 16.30h1.0v1.0h-1.0zM62.18 16.30h1.0v1.0h-1.0zM59.85 18.70h1.0v1.0h-1.0zM62.18 18.70h1.0v1.0h-1.0zM59.85 21.10h1.0v1.0h-1.0zM62.18 21.10h1.0v1.0h-1.0zM59.85 23.50h1.0v1.0h-1.0zM62.18 23.50h1.0v1.0h-1.0zM59.85 25.90h1.0v1.0h-1.0zM62.18 25.90h1.0v1.0h-1.0zM59.85 28.30h1.0v1.0h-1.0zM62.18 28.30h1.0v1.0h-1.0zM59.85 30.70h1.0v1.0h-1.0zM62.18 30.70h1.0v1.0h-1.0zM72.58 16.30h1.0v1.0h-1.0zM74.91 16.30h1.0v1.0h-1.0zM72.58 18.70h1.0v1.0h-1.0zM74.91 18.70h1.0v1.0h-1.0zM72.58 21.10h1.0v1.0h-1.0zM74.91 21.10h1.0v1.0h-1.0zM72.58 23.50h1.0v1.0h-1.0zM74.91 23.50h1.0v1.0h-1.0zM72.58 25.90h1.0v1.0h-1.0zM74.91 25.90h1.0v1.0h-1.0zM72.58 28.30h1.0v1.0h-1.0zM74.91 28.30h1.0v1.0h-1.0zM72.58 30.70h1.0v1.0h-1.0zM74.91 30.70h1.0v1.0h-1.0zM85.31 16.30h1.0v1.0h-1.0zM87.64 16.30h1.0v1.0h-1.0zM85.31 18.70h1.0v1.0h-1.0zM87.64 18.70h1.0v1.0h-1.0zM85.31 21.10h1.0v1.0h-1.0zM87.64 21.10h1.0v1.0h-1.0zM85.31 23.50h1.0v1.0h-1.0zM87.64 23.50h1.0v1.0h-1.0zM85.31 25.90h1.0v1.0h-1.0zM87.64 25.90h1.0v1.0h-1.0zM85.31 28.30h1.0v1.0h-1.0zM87.64 28.30h1.0v1.0h-1.0zM85.31 30.70h1.0v1.0h-1.0zM87.64 30.70h1.0v1.0h-1.0zM110.77 16.30h1.0v1.0h-1.0zM113.10 16.30h1.0v1.0h-1.0zM110.77 18.70h1.0v1.0h-1.0zM113.10 18.70h1.0v1.0h-1.0zM110.77 21.10h1.0v1.0h-1.0zM113.10 21.10h1.0v1.0h-1.0zM110.77 23.50h1.0v1.0h-1.0zM113.10 23.50h1.0v1.0h-1.0zM110.77 25.90h1.0v1.0h-1.0zM113.10 25.90h1.0v1.0h-1.0zM110.77 28.30h1.0v1.0h-1.0zM113.10 28.30h1.0v1.0h-1.0zM110.77 30.70h1.0v1.0h-1.0zM113.10 30.70h1.0v1.0h-1.0zM123.50 16.30h1.0v1.0h-1.0zM125.83 16.30h1.0v1.0h-1.0zM123.50 18.70h1.0v1.0h-1.0zM125.83 18.70h1.0v1.0h-1.0zM123.50 21.10h1.0v1.0h-1.0zM125.83 21.10h1.0v1.0h-1.0zM123.50 23.50h1.0v1.0h-1.0zM125.83 23.50h1.0v1.0h-1.0zM123.50 25.90h1.0v1.0h-1.0zM125.83 25.90h1.0v1.0h-1.0zM123.50 28.30h1.0v1.0h-1.0zM125.83 28.30h1.0v1.0h-1.0zM123.50 30.70h1.0v1.0h-1.0zM125.83 30.70h1.0v1.0h-1.0zM136.23 16.30h1.0v1.0h-1.0zM138.56 16.30h1.0v1.0h-1.0zM136.23 18.70h1.0v1.0h-1.0zM138.56 18.70h1.0v1.0h-1.0zM136.23 21.10h1.0v1.0h-1.0zM138.56 21.10h1.0v1.0h-1.0zM136.23 23.50h1.0v1.0h-1.0zM138.56 23.50h1.0v1.0h-1.0zM136.23 25.90h1.0v1.0h-1.0zM138.56 25.90h1.0v1.0h-1.0zM136.23 28.30h1.0v1.0h-1.0zM138.56 28.30h1.0v1.0h-1.0zM136.23 30.70h1.0v1.0h-1.0zM138.56 30.70h1.0v1.0h-1.0zM161.69 16.30h1.0v1.0h-1.0zM164.02 16.30h1.0v1.0h-1.0zM161.69 18.70h1.0v1.0h-1.0zM164.02 18.70h1.0v1.0h-1.0zM161.69 21.10h1.0v1.0h-1.0zM164.02 21.10h1.0v1.0h-1.0zM161.69 23.50h1.0v1.0h-1.0zM164.02 23.50h1.0v1.0h-1.0zM161.69 25.90h1.0v1.0h-1.0zM164.02 25.90h1.0v1.0h-1.0zM161.69 28.30h1.0v1.0h-1.0zM164.02 28.30h1.0v1.0h-1.0zM161.69 30.70h1.0v1.0h-1.0zM164.02 30.70h1.0v1.0h-1.0zM174.42 16.30h1.0v1.0h-1.0zM176.75 16.30h1.0v1.0h-1.0zM174.42 18.70h1.0v1.0h-1.0zM176.75 18.70h1.0v1.0h-1.0zM174.42 21.10h1.0v1.0h-1.0zM176.75 21.10h1.0v1.0h-1.0zM174.42 23.50h1.0v1.0h-1.0zM176.75 23.50h1.0v1.0h-1.0zM174.42 25.90h1.0v1.0h-1.0zM176.75 25.90h1.0v1.0h-1.0zM174.42 28.30h1.0v1.0h-1.0zM176.75 28.30h1.0v1.0h-1.0zM174.42 30.70h1.0v1.0h-1.0zM176.75 30.70h1.0v1.0h-1.0zM187.15 16.30h1.0v1.0h-1.0zM189.48 16.30h1.0v1.0h-1.0zM187.15 18.70h1.0v1.0h-1.0zM189.48 18.70h1.0v1.0h-1.0zM187.15 21.10h1.0v1.0h-1.0zM189.48 21.10h1.0v1.0h-1.0zM187.15 23.50h1.0v1.0h-1.0zM189.48 23.50h1.0v1.0h-1.0zM187.15 25.90h1.0v1.0h-1.0zM189.48 25.90h1.0v1.0h-1.0zM187.15 28.30h1.0v1.0h-1.0zM189.48 28.30h1.0v1.0h-1.0zM187.15 30.70h1.0v1.0h-1.0zM189.48 30.70h1.0v1.0h-1.0zM212.61 16.30h1.0v1.0h-1.0zM214.94 16.30h1.0v1.0h-1.0zM212.61 18.70h1.0v1.0h-1.0zM214.94 18.70h1.0v1.0h-1.0zM212.61 21.10h1.0v1.0h-1.0zM214.94 21.10h1.0v1.0h-1.0zM212.61 23.50h1.0v1.0h-1.0zM214.94 23.50h1.0v1.0h-1.0zM212.61 25.90h1.0v1.0h-1.0zM214.94 25.90h1.0v1.0h-1.0zM212.61 28.30h1.0v1.0h-1.0zM214.94 28.30h1.0v1.0h-1.0zM212.61 30.70h1.0v1.0h-1.0zM214.94 30.70h1.0v1.0h-1.0zM225.34 16.30h1.0v1.0h-1.0zM227.67 16.30h1.0v1.0h-1.0zM225.34 18.70h1.0v1.0h-1.0zM227.67 18.70h1.0v1.0h-1.0zM225.34 21.10h1.0v1.0h-1.0zM227.67 21.10h1.0v1.0h-1.0zM225.34 23.50h1.0v1.0h-1.0zM227.67 23.50h1.0v1.0h-1.0zM225.34 25.90h1.0v1.0h-1.0zM227.67 25.90h1.0v1.0h-1.0zM225.34 28.30h1.0v1.0h-1.0zM227.67 28.30h1.0v1.0h-1.0zM225.34 30.70h1.0v1.0h-1.0zM227.67 30.70h1.0v1.0h-1.0zM238.07 16.30h1.0v1.0h-1.0zM240.40 16.30h1.0v1.0h-1.0zM238.07 18.70h1.0v1.0h-1.0zM240.40 18.70h1.0v1.0h-1.0zM238.07 21.10h1.0v1.0h-1.0zM240.40 21.10h1.0v1.0h-1.0zM238.07 23.50h1.0v1.0h-1.0zM240.40 23.50h1.0v1.0h-1.0zM238.07 25.90h1.0v1.0h-1.0zM240.40 25.90h1.0v1.0h-1.0zM238.07 28.30h1.0v1.0h-1.0zM240.40 28.30h1.0v1.0h-1.0zM238.07 30.70h1.0v1.0h-1.0zM240.40 30.70h1.0v1.0h-1.0zM250.80 16.30h1.0v1.0h-1.0zM253.13 16.30h1.0v1.0h-1.0zM250.80 18.70h1.0v1.0h-1.0zM253.13 18.70h1.0v1.0h-1.0zM250.80 21.10h1.0v1.0h-1.0zM253.13 21.10h1.0v1.0h-1.0zM250.80 23.50h1.0v1.0h-1.0zM253.13 23.50h1.0v1.0h-1.0zM250.80 25.90h1.0v1.0h-1.0zM253.13 25.90h1.0v1.0h-1.0zM250.80 28.30h1.0v1.0h-1.0zM253.13 28.30h1.0v1.0h-1.0zM250.80 30.70h1.0v1.0h-1.0zM253.13 30.70h1.0v1.0h-1.0zM263.53 16.30h1.0v1.0h-1.0zM265.86 16.30h1.0v1.0h-1.0zM263.53 18.70h1.0v1.0h-1.0zM265.86 18.70h1.0v1.0h-1.0zM263.53 21.10h1.0v1.0h-1.0zM265.86 21.10h1.0v1.0h-1.0zM263.53 23.50h1.0v1.0h-1.0zM265.86 23.50h1.0v1.0h-1.0zM263.53 25.90h1.0v1.0h-1.0zM265.86 25.90h1.0v1.0h-1.0zM263.53 28.30h1.0v1.0h-1.0zM265.86 28.30h1.0v1.0h-1.0zM263.53 30.70h1.0v1.0h-1.0zM265.86 30.70h1.0v1.0h-1.0zM276.26 16.30h1.0v1.0h-1.0zM278.59 16.30h1.0v1.0h-1.0zM276.26 18.70h1.0v1.0h-1.0zM278.59 18.70h1.0v1.0h-1.0zM276.26 21.10h1.0v1.0h-1.0zM278.59 21.10h1.0v1.0h-1.0zM276.26 23.50h1.0v1.0h-1.0zM278.59 23.50h1.0v1.0h-1.0zM276.26 25.90h1.0v1.0h-1.0zM278.59 25.90h1.0v1.0h-1.0zM276.26 28.30h1.0v1.0h-1.0zM278.59 28.30h1.0v1.0h-1.0zM276.26 30.70h1.0v1.0h-1.0zM278.59 30.70h1.0v1.0h-1.0zM288.99 16.30h1.0v1.0h-1.0zM291.32 16.30h1.0v1.0h-1.0zM288.99 18.70h1.0v1.0h-1.0zM291.32 18.70h1.0v1.0h-1.0zM288.99 21.10h1.0v1.0h-1.0zM291.32 21.10h1.0v1.0h-1.0zM288.99 23.50h1.0v1.0h-1.0zM291.32 23.50h1.0v1.0h-1.0zM288.99 25.90h1.0v1.0h-1.0zM291.32 25.90h1.0v1.0h-1.0zM288.99 28.30h1.0v1.0h-1.0zM291.32 28.30h1.0v1.0h-1.0zM288.99 30.70h1.0v1.0h-1.0zM291.32 30.70h1.0v1.0h-1.0zM301.72 16.30h1.0v1.0h-1.0zM304.05 16.30h1.0v1.0h-1.0zM301.72 18.70h1.0v1.0h-1.0zM304.05 18.70h1.0v1.0h-1.0zM301.72 21.10h1.0v1.0h-1.0zM304.05 21.10h1.0v1.0h-1.0zM301.72 23.50h1.0v1.0h-1.0zM304.05 23.50h1.0v1.0h-1.0zM301.72 25.90h1.0v1.0h-1.0zM304.05 25.90h1.0v1.0h-1.0zM301.72 28.30h1.0v1.0h-1.0zM304.05 28.30h1.0v1.0h-1.0zM301.72 30.70h1.0v1.0h-1.0zM304.05 30.70h1.0v1.0h-1.0z"/></svg></div>
</body></html>
